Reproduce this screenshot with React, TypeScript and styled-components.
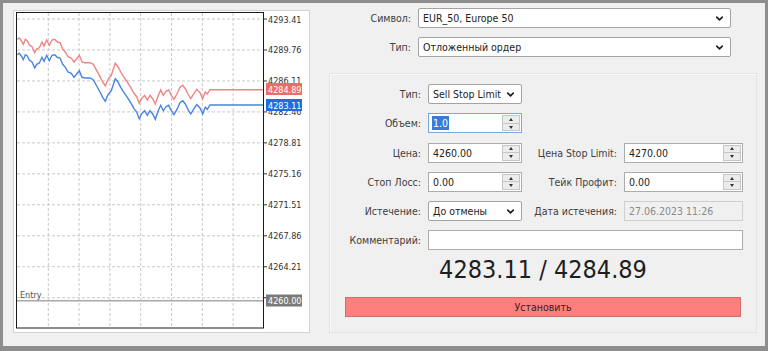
import styled, { createGlobalStyle } from "styled-components";
import { ChevronDown } from "lucide-react";

const Global = createGlobalStyle`
  html, body { margin: 0; padding: 0; background: #8e8e8e; }
  body {
    font-family: "DejaVu Sans Condensed", "DejaVu Sans", sans-serif;
    font-stretch: condensed;
  }
`;

const Window = styled.div`
  width: 768px;
  height: 351px;
  box-sizing: border-box;
  border: solid #8e8e8e;
  border-width: 3px 3px 5px 3px;
  background: #f0f0f0;
  display: flex;
  align-items: flex-start;
`;

const ChartFrame = styled.div`
  margin: 7px 0 0 10px;
  width: 297px;
  height: 323px;
  box-sizing: border-box;
  border: 1px solid #d2d2d2;
  background: #fff;
  flex-shrink: 0;
`;

const RightPanel = styled.div`
  flex: 1;
  padding-top: 5px;
  display: flex;
  flex-direction: column;
`;

const TopGrid = styled.div`
  display: grid;
  grid-template-columns: 101px 313px;
  grid-auto-rows: 20px;
  column-gap: 7px;
  row-gap: 9px;
`;

const Label = styled.span<{ $lead?: boolean }>`
  font-size: 10.5px;
  color: #404040;
  text-align: right;
  align-self: center;
  white-space: nowrap;
  ${(p) => (p.$lead ? "grid-column: 1;" : "")}
`;

const Select = styled.div`
  box-sizing: border-box;
  height: 20px;
  border: 1px solid #a3a3a3;
  border-radius: 2px;
  background: #fff;
  display: flex;
  align-items: center;
  justify-content: space-between;
  padding: 0 5px 0 4px;
  font-size: 10.5px;
  color: #222;
  white-space: nowrap;
`;

const Group = styled.div`
  margin: 16px 0 0 19px;
  width: 428px;
  height: 260px;
  box-sizing: border-box;
  border: 1px solid #e4e4e4;
  box-shadow: inset 1px 1px 0 #fafafa;
  padding: 10px 0 14px;
  display: flex;
  flex-direction: column;
`;

const FormGrid = styled.div`
  display: grid;
  grid-template-columns: 91px 94px 88px 119px;
  grid-auto-rows: 20px;
  column-gap: 7px;
  row-gap: 9.25px;
`;

const Field = styled.div<{ $focus?: boolean; $disabled?: boolean; $wide?: boolean }>`
  box-sizing: border-box;
  height: 20px;
  border: 1px solid ${(p) => (p.$focus ? "#74a9e4" : p.$disabled ? "#cfcfcf" : "#acacac")};
  background: ${(p) => (p.$disabled ? "#f0f0f0" : "#fff")};
  color: ${(p) => (p.$disabled ? "#8a8a8a" : "#222")};
  font-size: 10.5px;
  display: flex;
  align-items: center;
  justify-content: space-between;
  padding: 0 1px 0 4px;
  ${(p) => (p.$wide ? "grid-column: 2 / 5;" : "")}
`;

const Selected = styled.span`
  background: #3a7bd9;
  color: #fff;
  padding: 1px 1px;
  margin-left: -1px;
`;

const Spin = styled.div`
  width: 18px;
  height: 16px;
  box-sizing: border-box;
  border: 1px solid #c6c6c6;
  background: #ececec;
  display: flex;
  flex-direction: column;
`;

const SpinHalf = styled.div<{ $down?: boolean }>`
  flex: 1;
  display: flex;
  align-items: center;
  justify-content: center;
  ${(p) => (p.$down ? "border-top: 1px solid #c6c6c6;" : "")}
  &::after {
    content: "";
    width: 0;
    height: 0;
    border-left: 2.5px solid transparent;
    border-right: 2.5px solid transparent;
    ${(p) => (p.$down ? "border-top: 3px solid #333;" : "border-bottom: 3px solid #333;")}
  }
`;

const Price = styled.div`
  margin-top: 5px;
  text-align: center;
  font-size: 25px;
  line-height: 30px;
  color: #1e1e1e;
`;

const SubmitButton = styled.button`
  margin: 12px 15px 0;
  height: 20px;
  border: 1px solid #d06e6e;
  background: #ff7f7f;
  color: #3a1c1c;
  font-family: inherit;
  font-stretch: condensed;
  font-size: 10.5px;
  padding: 0;
`;

const Chevron = () => <ChevronDown size={11} strokeWidth={3.5} color="#1e1e1e" />;

function Spinner({ value, focus }: { value: string; focus?: boolean }) {
  return (
    <Field $focus={focus}>
      {focus ? <Selected>{value}</Selected> : <span>{value}</span>}
      <Spin>
        <SpinHalf />
        <SpinHalf $down />
      </Spin>
    </Field>
  );
}

// red (ask) line, traced at 3x scale
const ask: [number, number][] = [
  [52, 118], [58, 114], [64, 122], [70, 133], [76, 118], [82, 122], [88, 134], [96, 140],
  [104, 158], [110, 147], [118, 143], [126, 126], [132, 138], [140, 120], [148, 136],
  [156, 120], [164, 118], [172, 126], [180, 128], [188, 147], [196, 156], [204, 170],
  [214, 174], [222, 186], [230, 176], [238, 166], [246, 186], [256, 188], [270, 188],
  [280, 193], [290, 212], [300, 230], [308, 246], [316, 258], [324, 238], [334, 226],
  [346, 190], [354, 200], [362, 216], [372, 232], [382, 246], [392, 262], [402, 280],
  [410, 290], [418, 310], [426, 294], [434, 286], [442, 300], [450, 286], [458, 296],
  [466, 312], [474, 288], [482, 270], [490, 286], [498, 274], [506, 270], [514, 286],
  [522, 298], [532, 280], [540, 262], [548, 256], [556, 266], [564, 282], [572, 296],
  [582, 280], [590, 268], [600, 278], [608, 296], [616, 276], [622, 282], [630, 269],
  [789, 269],
];

const line = (dy: number) => ask.map(([x, y]) => `${(x / 3).toFixed(1)},${((y + dy) / 3).toFixed(1)}`).join(" ");

// the lowest level (4260.56) sits under the entry badge, so only its tick is drawn
const levels = ["4293.41", "4289.76", "4286.11", "4282.46", "4278.81", "4275.16", "4271.51", "4267.86", "4264.21", ""];

function Chart() {
  const gy = levels.map((_, i) => 19 + 30.97 * i);
  const gx = Array.from({ length: 7 }, (_, i) => 48.3 + 30.8 * i);
  const font = '"DejaVu Sans Condensed", "DejaVu Sans", sans-serif';
  return (
    <svg width="295" height="321" viewBox="14 11 295 321" style={{ display: "block" }}>
      {gy.map((y) => (
        <line key={"h" + y} x1="17" x2="263" y1={y} y2={y} stroke="#c9c9c9" strokeDasharray="3 2" />
      ))}
      {gx.map((x) => (
        <line key={"v" + x} x1={x} x2={x} y1="13" y2="328" stroke="#c9c9c9" strokeDasharray="3 2" />
      ))}
      <line x1="17" x2="263" y1="300.7" y2="300.7" stroke="#a8a8a8" strokeWidth="1.5" />
      <text x="20" y="298" fontSize="9" fill="#555" fontFamily={font}>Entry</text>
      <polyline points={line(0)} fill="none" stroke="#f08585" strokeWidth="1.4" />
      <polyline points={line(46)} fill="none" stroke="#4a84de" strokeWidth="1.4" />
      <rect x="16.5" y="12.5" width="247" height="315.5" fill="none" stroke="#1a1a1a" />
      {gy.map((y, i) => (
        <g key={"l" + i}>
          <line x1="263" x2="267" y1={y} y2={y} stroke="#333" />
          {levels[i] && (
            <text x="268" y={y + 3.5} fontSize="9" fill="#333" fontFamily={font}>{levels[i]}</text>
          )}
        </g>
      ))}
      <rect x="266" y="83" width="36" height="12" fill="#ee6b6b" />
      <text x="268" y="92.5" fontSize="9" fill="#fff" fontFamily={font}>4284.89</text>
      <rect x="266" y="99" width="36" height="12" fill="#1d6fe0" />
      <text x="268" y="108.5" fontSize="9" fill="#fff" fontFamily={font}>4283.11</text>
      <rect x="266" y="294.5" width="36" height="12" fill="#7b7b7b" />
      <text x="268" y="304" fontSize="9" fill="#fff" fontFamily={font}>4260.00</text>
    </svg>
  );
}

export default function App() {
  return (
    <>
      <Global />
      <Window>
        <ChartFrame>
          <Chart />
        </ChartFrame>
        <RightPanel>
          <TopGrid>
            <Label>Символ:</Label>
            <Select>EUR_50, Europe 50<Chevron /></Select>
            <Label>Тип:</Label>
            <Select>Отложенный ордер<Chevron /></Select>
          </TopGrid>
          <Group>
            <FormGrid>
              <Label $lead>Тип:</Label>
              <Select>Sell Stop Limit<Chevron /></Select>
              <Label $lead>Объем:</Label>
              <Spinner value="1.0" focus />
              <Label $lead>Цена:</Label>
              <Spinner value="4260.00" />
              <Label>Цена Stop Limit:</Label>
              <Spinner value="4270.00" />
              <Label $lead>Стоп Лосс:</Label>
              <Spinner value="0.00" />
              <Label>Тейк Профит:</Label>
              <Spinner value="0.00" />
              <Label $lead>Истечение:</Label>
              <Select>До отмены<Chevron /></Select>
              <Label>Дата истечения:</Label>
              <Field $disabled>27.06.2023 11:26</Field>
              <Label $lead>Комментарий:</Label>
              <Field $wide />
            </FormGrid>
            <Price>4283.11 / 4284.89</Price>
            <SubmitButton>Установить</SubmitButton>
          </Group>
        </RightPanel>
      </Window>
    </>
  );
}
